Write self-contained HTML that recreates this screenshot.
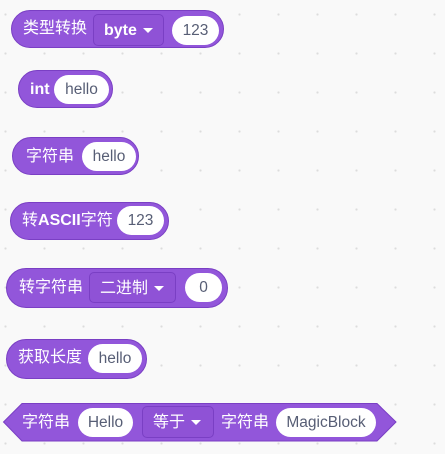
<!DOCTYPE html><html><head><style>
body{margin:0;width:445px;height:454px;overflow:hidden;background-color:#f9f9f9;background-image:radial-gradient(circle,#dcdcdc 1px,transparent 1.2px);background-size:39px 39px;background-position:-14px -5px;font-family:"Liberation Sans","Noto Sans CJK SC",sans-serif;position:relative}
.b{position:absolute;height:36px;background:#9256da;border:1px solid #7a3fc4;border-radius:19px;box-sizing:content-box}
.t{position:absolute;color:#fff;font-size:16px;line-height:20px}
.i{position:absolute;background:#fff;border-radius:15px;color:#575e75;font-size:15.5px;text-align:center;height:29px;line-height:29px}
.d{position:absolute;border:1px solid #7a3fc4;background:#8f52d6;border-radius:5px;color:#fff;font-size:16px;height:30px;line-height:30px;box-sizing:border-box;padding-left:10px}
.ar{display:inline-block;width:0;height:0;border-left:5px solid transparent;border-right:5px solid transparent;border-top:5px solid #fff;vertical-align:middle;margin-left:6px}
</style></head><body>
<div class="b" style="left:11px;top:10px;width:211px"></div>
<div class="t" style="left:23px;top:19px">类型转换</div>
<div class="d" style="left:93px;top:14px;width:71px;height:32px;line-height:32px;font-weight:bold">byte<span class="ar"></span></div>
<div class="i" style="left:172px;top:16px;width:47px">123</div>

<div class="b" style="left:18px;top:70px;width:93px"></div>
<div class="t" style="left:30px;top:80px;font-weight:bold">int</div>
<div class="i" style="left:54px;top:75px;width:55px">hello</div>

<div class="b" style="left:12px;top:137px;width:125px"></div>
<div class="t" style="left:26px;top:147px">字符串</div>
<div class="i" style="left:82px;top:142px;width:54px">hello</div>

<div class="b" style="left:10px;top:202px;width:157px"></div>
<div class="t" style="left:22px;top:211px">转<b>ASCII</b>字符</div>
<div class="i" style="left:117px;top:206px;width:47px">123</div>

<div class="b" style="left:6px;top:268px;width:220px;height:38px;border-radius:20px"></div>
<div class="t" style="left:19px;top:278px">转字符串</div>
<div class="d" style="left:89px;top:272px;width:87px;height:31px;line-height:31px">二进制<span class="ar"></span></div>
<div class="i" style="left:185px;top:273px;width:37px">0</div>

<div class="b" style="left:6px;top:339px;width:139px;height:38px;border-radius:20px"></div>
<div class="t" style="left:18px;top:348px">获取长度</div>
<div class="i" style="left:88px;top:344px;width:54px">hello</div>

<svg style="position:absolute;left:0;top:400px" width="400" height="44"><polygon points="3.5,22 22,3.5 377,3.5 396,22 377,41 22,41" fill="#9256da" stroke="#7a3fc4"/></svg>
<div class="t" style="left:22px;top:413px">字符串</div>
<div class="i" style="left:78px;top:408px;width:55px">Hello</div>
<div class="d" style="left:142px;top:406px;width:72px;height:32px;line-height:32px">等于<span class="ar"></span></div>
<div class="t" style="left:221px;top:413px">字符串</div>
<div class="i" style="left:276px;top:408px;width:100px">MagicBlock</div>
</body></html>
